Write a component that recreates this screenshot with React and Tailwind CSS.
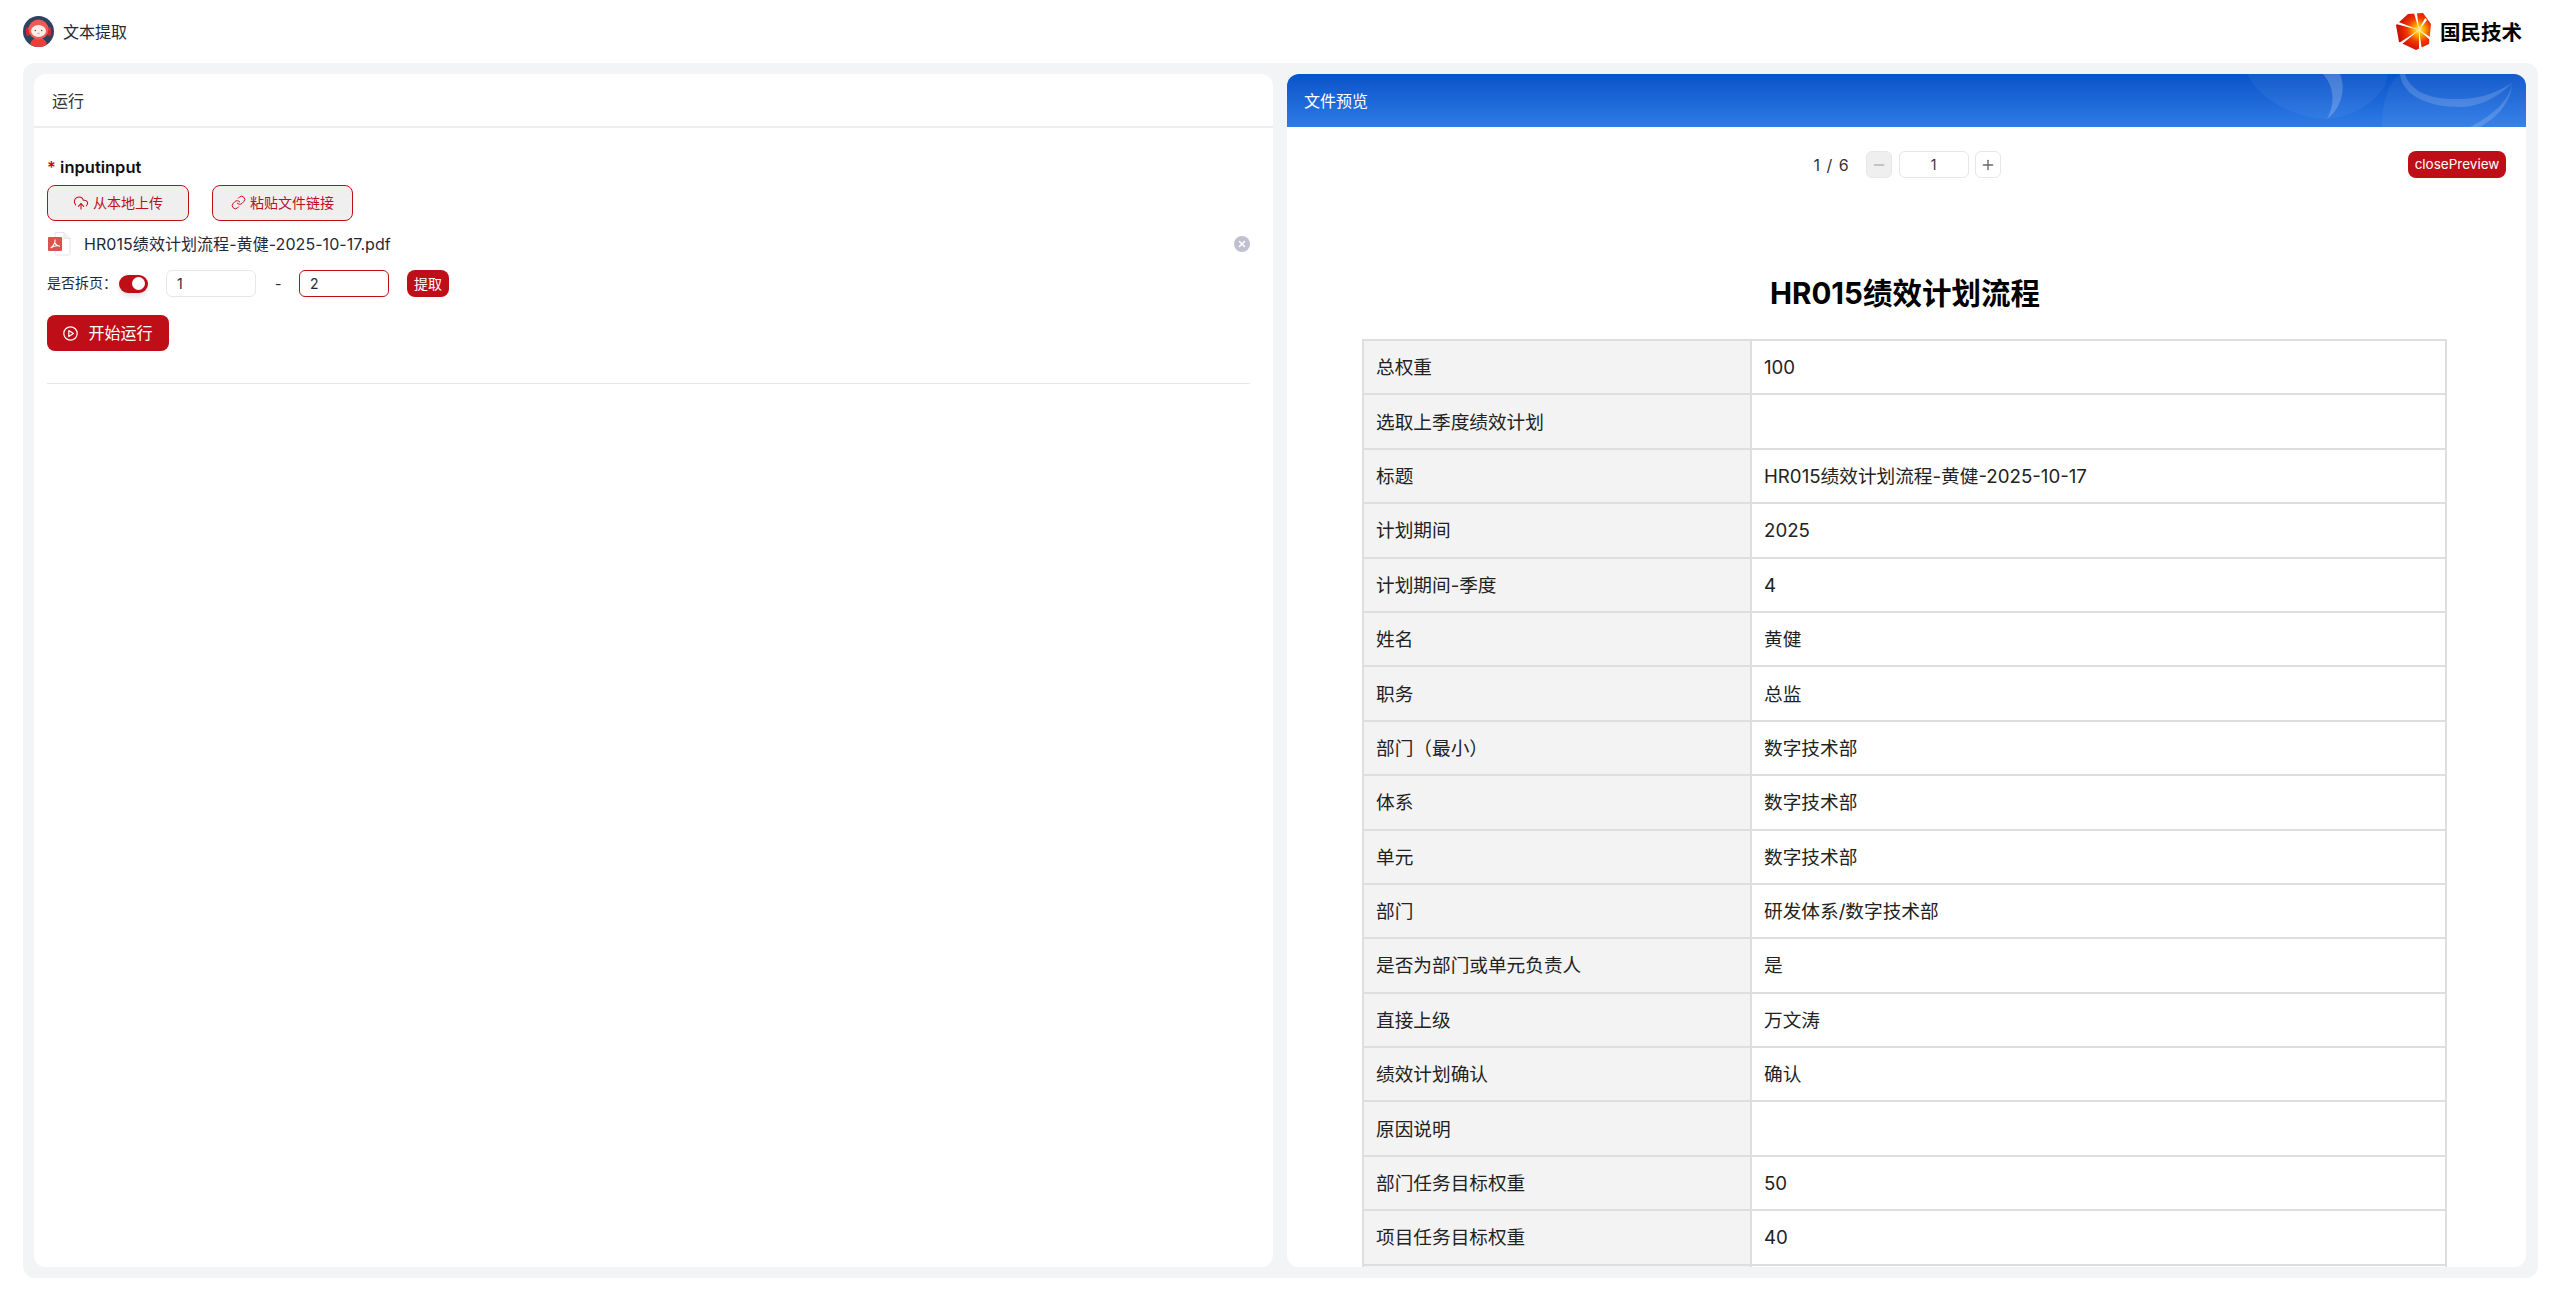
import React from 'react';
import { CloudUpload, Link, Minus, Plus, X } from 'lucide-react';

const rows = [
  ['总权重', '100'],
  ['选取上季度绩效计划', ''],
  ['标题', 'HR015绩效计划流程-黄健-2025-10-17'],
  ['计划期间', '2025'],
  ['计划期间-季度', '4'],
  ['姓名', '黄健'],
  ['职务', '总监'],
  ['部门（最小）', '数字技术部'],
  ['体系', '数字技术部'],
  ['单元', '数字技术部'],
  ['部门', '研发体系/数字技术部'],
  ['是否为部门或单元负责人', '是'],
  ['直接上级', '万文涛'],
  ['绩效计划确认', '确认'],
  ['原因说明', ''],
  ['部门任务目标权重', '50'],
  ['项目任务目标权重', '40'],
  ['', ''],
];

const Avatar = () => (
  <svg width="31" height="31" viewBox="0 0 31 31">
    <defs>
      <clipPath id="avatarClip"><circle cx="15.5" cy="15.5" r="15.5" /></clipPath>
    </defs>
    <g clipPath="url(#avatarClip)">
      <rect width="31" height="31" fill="#2b4560" />
      <path d="M7 31c0-6 3-9 8.500-9s8.500 3 8.500 9Z" fill="#e8403c" />
      <rect x="3" y="11" width="4" height="9" rx="2" fill="#c92c2b" />
      <rect x="24" y="11" width="4" height="9" rx="2" fill="#c92c2b" />
      <ellipse cx="15.5" cy="13.500" rx="10" ry="10" fill="#ef5a54" />
      <ellipse cx="15.5" cy="15" rx="7.500" ry="6" fill="#fbeee8" />
      <circle cx="12.300" cy="14.500" r=".7" fill="#4a3a3a" />
      <circle cx="18.700" cy="14.500" r=".7" fill="#4a3a3a" />
      <path d="M14.300 17.200c.8.5 1.600.5 2.400 0" stroke="#c66" strokeWidth=".6" fill="none" />
    </g>
  </svg>
);

const BrandMark = () => (
  <svg width="36" height="38" viewBox="0 0 36 38">
    <defs>
      <radialGradient id="brandGlow" cx="23" cy="17" r="24" gradientUnits="userSpaceOnUse">
        <stop offset="0" stopColor="#fff7a0" />
        <stop offset="0.2" stopColor="#fdb400" />
        <stop offset="0.5" stopColor="#ee3a00" />
        <stop offset="1" stopColor="#c40000" />
      </radialGradient>
    </defs>
    <polygon points="12,1 27,0 35,11 33,31 20,37 3,29 0,12" fill="url(#brandGlow)" />
    <g fill="#ffffff">
      <polygon points="23,17 0,8 0,11" />
      <polygon points="23,17 18,0 21,0" />
      <polygon points="23,17 3,30 5,32" />
      <polygon points="23,17 23,38 26,37" />
      <polygon points="23,17 36,25 35,28" />
      <polygon points="23,17 29,5 31,7" />
    </g>
  </svg>
);

const PdfIcon = () => (
  <svg width="24" height="24" viewBox="0 0 24 24">
    <path d="M8 .5h9l6 6V21a2 2 0 0 1-2 2H10a2 2 0 0 1-2-2Z" fill="#fff" stroke="#e4e4ec" />
    <path d="M17 .5V6.500h6" fill="#f1f1f5" stroke="#e4e4ec" />
    <rect x="1" y="5" width="14" height="14" rx="1" fill="#d9534f" />
    <path d="M8 7.500c.6 3-2 7-4.300 8.500M8 11c1 2 2.500 3 5 3.200M4.500 15.500c2-1.500 5-2 8-1.500" stroke="#fff" strokeWidth="1.100" fill="none" />
  </svg>
);

const PlayIcon = () => (
  <svg width="15" height="15" viewBox="0 0 15 15" fill="none" stroke="currentColor" strokeWidth="1.200" strokeLinejoin="round">
    <circle cx="7.500" cy="7.500" r="6.700" />
    <path d="M5.800 4.500 10.400 7.500 5.800 10.500Z" />
  </svg>
);

const HeaderArt = () => (
  <svg className="absolute right-0 top-0 h-[53px] w-[366px]" viewBox="0 0 366 53" fill="#ffffff">
    <path d="M87 0C100 28 140 45 167 45C190 43 212 32 225 12L228 0Z" opacity=".05" />
    <path d="M163 0H180C186 14 182 34 167 45C175 30 175 14 163 0Z" opacity=".2" />
    <path d="M240 0C228 8 222 30 222 53H366V0Z" opacity=".05" />
    <path d="M240 0C242 20 265 33 300 33C320 33 340 22 352 9C335 20 315 26 295 25C265 25 250 15 245 0Z" opacity=".16" />
    <path d="M352 9C350 25 335 40 310 53H320C340 42 352 25 352 9Z" opacity=".16" />
  </svg>
);

export default function App() {
  return (
    <div className="flex h-screen flex-col bg-white font-['Inter','Noto_Sans_CJK_SC',sans-serif] text-[#1f2937]">
      <header className="flex h-[63px] shrink-0 items-center justify-between pl-[23px] pr-[38px]">
        <div className="flex items-center gap-[9px]">
          <Avatar />
          <span className="text-base">文本提取</span>
        </div>
        <div className="flex items-center gap-[8px]">
          <BrandMark />
          <span className="font-['Noto_Sans_CJK_SC',sans-serif] text-[20.5px] font-bold text-black">国民技术</span>
        </div>
      </header>

      <main className="mb-[11px] ml-[23px] mr-[22px] flex min-h-0 flex-1 gap-[14px] rounded-xl bg-[#f3f4f6] pb-[11px] pl-[11px] pr-[12px] pt-[11px]">
        <section className="flex min-w-0 flex-1 flex-col rounded-xl bg-white">
          <div className="flex h-[54px] shrink-0 items-center border-b-2 border-[#eceef1] pl-[18px] pt-[2px] text-base text-[#333]">运行</div>
          <div className="pl-[13px] pr-[23px] pt-[27px]">
            <div className="text-[16.5px] font-semibold leading-6 text-[#111]">
              <span className="text-[#be0f19]">*</span> inputinput
            </div>
            <div className="mt-[6px] flex gap-[23px]">
              <button className="flex h-9 w-[142px] items-center justify-center gap-1 rounded-lg border border-[#be0f19] bg-[#efefef] pb-[1px] text-sm text-[#be0f19]">
                <CloudUpload size={16} strokeWidth={1.6} />
                从本地上传
              </button>
              <button className="flex h-9 w-[141px] items-center justify-center gap-1 rounded-lg border border-[#be0f19] bg-[#efefef] pb-[1px] text-sm text-[#be0f19]">
                <Link size={15} strokeWidth={1.6} />
                粘贴文件链接
              </button>
            </div>
            <div className="mt-3 flex h-[22px] items-center">
              <PdfIcon />
              <span className="ml-[13px] flex-1 pb-[1px] text-base tracking-[0.06px] text-[#1f2937]">HR015绩效计划流程-黄健-2025-10-17.pdf</span>
              <span className="flex h-4 w-4 items-center justify-center rounded-full bg-[#c0c0d0] text-white">
                <X size={10} strokeWidth={3.5} />
              </span>
            </div>
            <div className="mt-[15px] flex h-[27px] items-center text-sm">
              <span className="w-[72px] pb-[2px]">是否拆页：</span>
              <span className="flex h-[18px] w-[29px] items-center justify-end rounded-full bg-[#be0f19] pr-[3px] shadow-md">
                <span className="h-[13px] w-[13px] rounded-full bg-white" />
              </span>
              <input readOnly value="1" className="ml-[18px] h-[27px] w-[90px] rounded-md border border-[#e5e7eb] pl-[10px] text-sm outline-none" />
              <span className="ml-[19px] w-[24px]">-</span>
              <input readOnly value="2" className="h-[27px] w-[90px] rounded-md border border-[#be0f19] pl-[10px] text-sm outline-none" />
              <button className="ml-[18px] h-[27px] w-[42px] rounded-lg bg-[#be0f19] text-sm text-white">提取</button>
            </div>
            <button className="mt-[18px] flex h-9 w-[122px] items-center justify-center gap-[10px] rounded-lg bg-[#be0f19] text-base text-white">
              <PlayIcon />
              开始运行
            </button>
            <div className="mt-8 border-t border-[#e5e7eb]" />
          </div>
        </section>

        <section className="flex min-w-0 flex-1 flex-col overflow-hidden rounded-xl bg-white">
          <div className="relative flex h-[53px] shrink-0 items-center overflow-hidden bg-gradient-to-b from-[#0853c8] to-[#2e7be8] pl-[17px] pt-[1px] text-base text-white">
            文件预览
            <HeaderArt />
          </div>
          <div className="min-h-0 flex-1 overflow-hidden pt-6">
            <div className="grid grid-cols-[1fr_auto_1fr] items-center pl-[20px] pr-[20px]">
              <span />
              <div className="flex items-center text-sm text-[#333]">
                <span className="mr-[16px] pl-[1px] text-base tracking-[1px]">1 / 6</span>
                <span className="flex h-[27px] w-[26px] items-center justify-center rounded-md border border-[#e5e7eb] bg-[#efefef] text-[#b5b5b5]">
                  <Minus size={16} strokeWidth={2} />
                </span>
                <span className="ml-[7px] flex h-[27px] w-[70px] items-center justify-center rounded-md border border-[#e5e7eb]">1</span>
                <span className="ml-[6px] flex h-[27px] w-[26px] items-center justify-center rounded-md border border-[#e5e7eb] text-[#666]">
                  <Plus size={16} strokeWidth={2} />
                </span>
              </div>
              <div className="flex justify-end">
                <button className="h-[27px] w-[98px] rounded-lg bg-[#be0f19] text-[13.5px] text-white">closePreview</button>
              </div>
            </div>
            <div className="pl-[75px] pr-[78px]">
              <h1 className="mt-[95px] h-10 text-center text-[29.5px] font-bold leading-10 text-black">HR015绩效计划流程</h1>
              <table className="mt-[26px] w-[1085px] table-fixed border-collapse text-[18.67px] text-[#222]">
                <colgroup>
                  <col className="w-[388px]" />
                  <col />
                </colgroup>
                <tbody>
                  {rows.map(([label, value], i) => (
                    <tr key={i} className="h-[54.4px]">
                      <td className="border-2 border-[#dedede] bg-[#f3f3f3] pl-[12px] pt-[2px]">{label}</td>
                      <td className="border-2 border-[#dedede] pl-[12px] pt-[2px]">{value}</td>
                    </tr>
                  ))}
                </tbody>
              </table>
            </div>
          </div>
        </section>
      </main>
    </div>
  );
}
